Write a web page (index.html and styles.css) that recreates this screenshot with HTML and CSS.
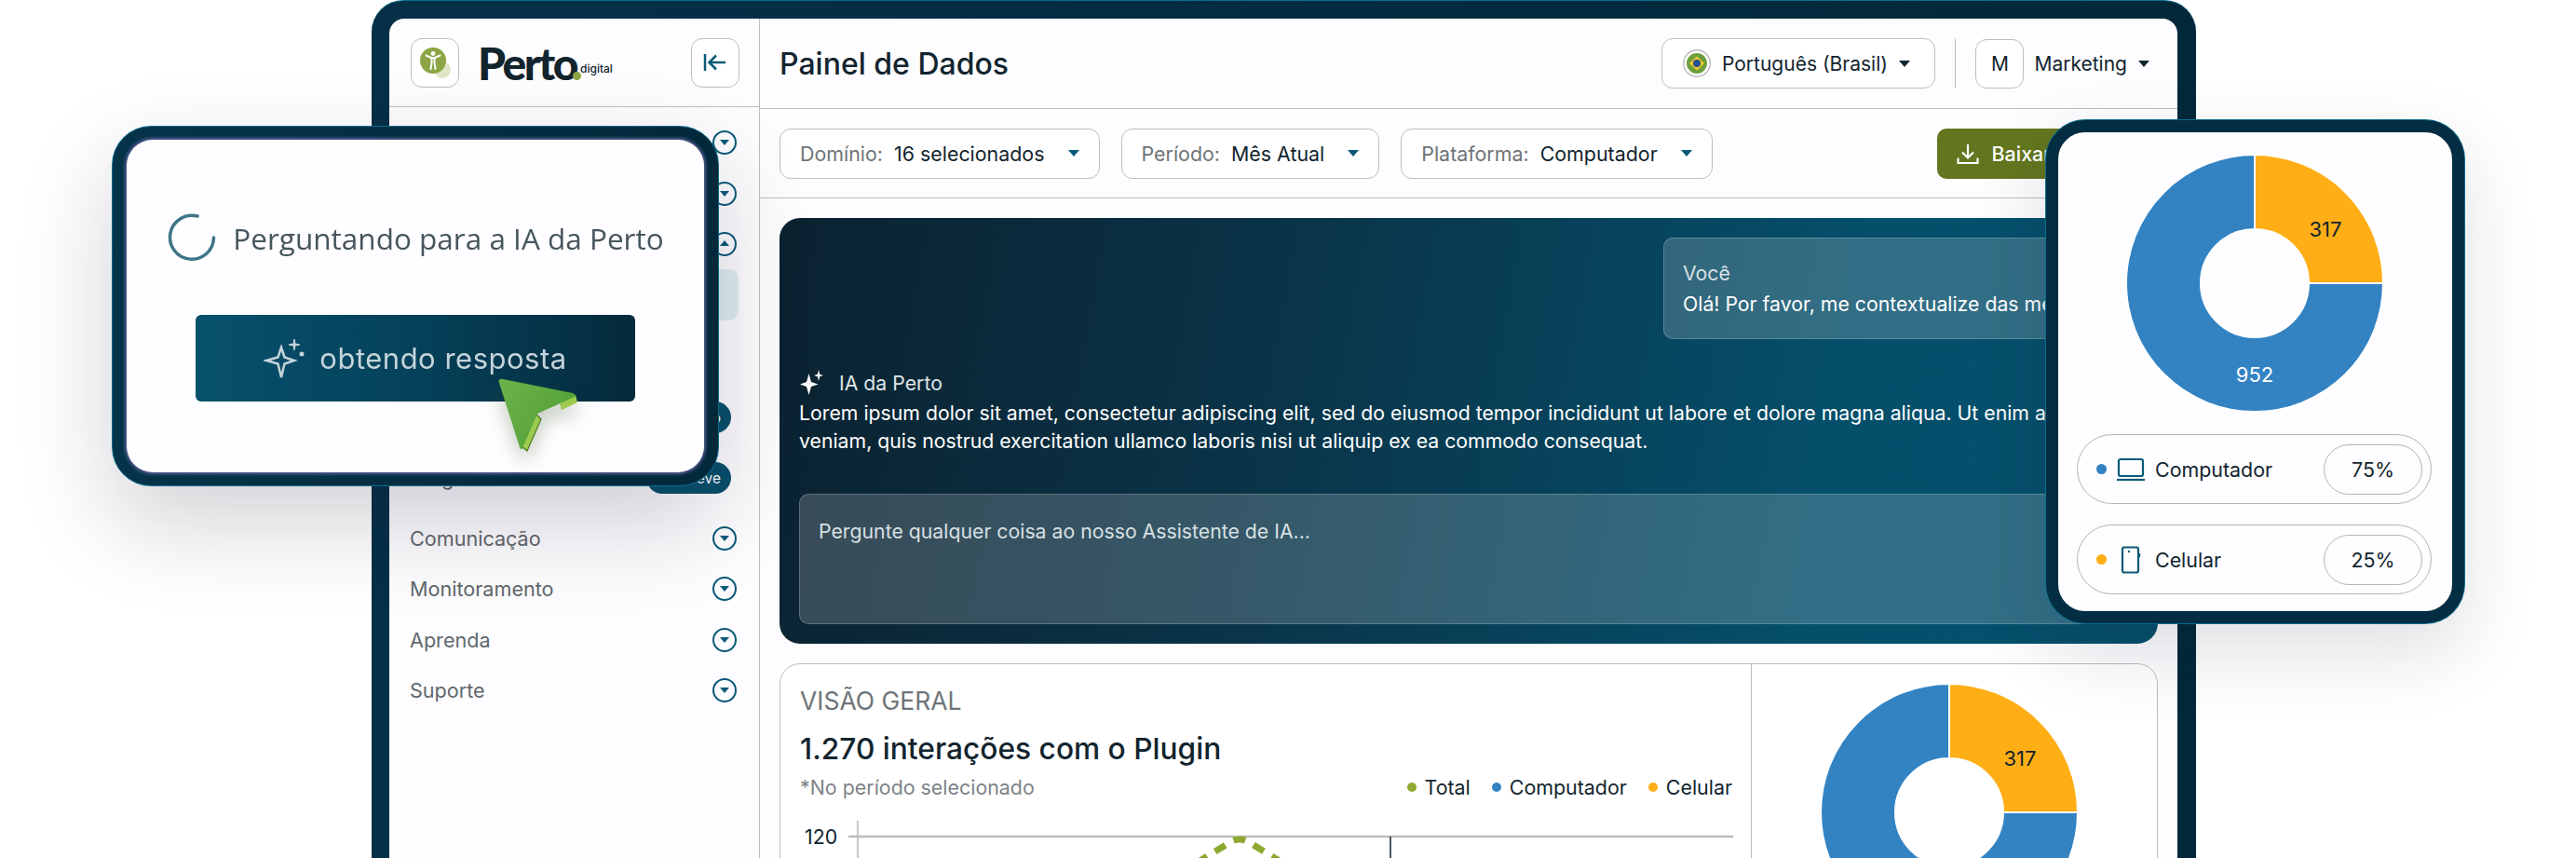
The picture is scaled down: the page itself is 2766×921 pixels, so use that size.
FILE: index.html
```html
<!DOCTYPE html>
<html lang="pt-BR">
  <head>
    <meta charset="UTF-8" />
    <meta name="viewport" content="width=device-width, initial-scale=1.0" />
    <title>Painel de Dados</title>
    <link rel="stylesheet" href="styles.css">
  </head>
  <body>
    <div class="device">
      <div class="screen">

        <aside class="sidebar">
          <div class="sidebar-head">
            <div class="square-btn logo-mark">
              <svg width="36" height="36" viewBox="0 0 36 36">
                <circle cx="26" cy="26" r="9" fill="#dfe6c8"/>
                <circle cx="16" cy="16" r="14" fill="#8ba544"/>
                <circle cx="16" cy="8.5" r="2.4" fill="#fff"/>
                <path d="M8.5 10.5 L14 13 H18 L23.500 10.500 M14.500 13 V18.500 L13.500 25 M17.500 13 V18.500 L18.500 25" fill="none" stroke="#fff" stroke-width="2" stroke-linecap="round"/>
              </svg>
            </div>
            <div class="logo-word">Perto<span class="logo-dot"></span><span class="logo-small">digital</span></div>
            <div class="square-btn collapse-btn">
              <svg width="26" height="22" viewBox="0 0 26 22" fill="none" stroke="#0a5a78" stroke-width="2.500">
                <path d="M2 2 V20 M24 11 H7 M14 3.500 L6.500 11 L14 18.500"/>
              </svg>
            </div>
          </div>
          <nav class="nav">
            <div class="nav-row">Visão Geral<span class="toggle"></span></div>
            <div class="nav-row">Relatórios<span class="toggle"></span></div>
            <div class="nav-row">Plugin<span class="toggle toggle-up"></span></div>
            <div class="nav-row nav-active">Personalizar</div>
            <div class="nav-row nav-tall">Conteúdo</div>
            <div class="nav-row nav-tag">Avatar<span class="tag">Novo</span></div>
            <div class="nav-row nav-tag nav-tag-last">Perguntas<span class="tag">Em breve</span></div>
            <div class="nav-row">Comunicação<span class="toggle"></span></div>
            <div class="nav-row">Monitoramento<span class="toggle"></span></div>
            <div class="nav-row">Aprenda<span class="toggle"></span></div>
            <div class="nav-row">Suporte<span class="toggle"></span></div>
          </nav>
        </aside>

        <main class="main">
          <header class="topbar">
            <h1 class="page-title">Painel de Dados</h1>
            <div class="topbar-right">
              <div class="lang-select">
                <svg class="flag" width="30" height="30" viewBox="0 0 30 30">
                  <circle cx="15" cy="15" r="14.300" fill="#fff" stroke="#b9b9b9" stroke-width="1.400"/>
                  <circle cx="15" cy="15" r="11" fill="#6f9f3c"/>
                  <path d="M15 7.500 L23 15 L15 22.500 L7 15 Z" fill="#f4c92b"/>
                  <circle cx="15" cy="15" r="4" fill="#24508f"/>
                </svg>
                <span>Português (Brasil)</span>
                <span class="caret caret-dark"></span>
              </div>
              <span class="topbar-sep"></span>
              <div class="square-btn user-mark">M</div>
              <div class="user-name">Marketing<span class="caret caret-dark"></span></div>
            </div>
          </header>

          <div class="filters">
            <div class="filter filter-domain"><span class="filter-label">Domínio:</span>16 selecionados<span class="caret"></span></div>
            <div class="filter"><span class="filter-label">Período:</span>Mês Atual<span class="caret"></span></div>
            <div class="filter"><span class="filter-label">Plataforma:</span>Computador<span class="caret"></span></div>
            <div class="download-btn">
              <svg width="24" height="24" viewBox="0 0 24 24" fill="none" stroke="#fff" stroke-width="2.200">
                <path d="M12 2 V16 M6 10.500 L12 16.500 L18 10.500 M1.500 16.500 V22 H22.500 V16.500"/>
              </svg>
              Baixar relatório
            </div>
          </div>

          <div class="content">
            <section class="ai-panel">
              <div class="bubble">
                <div class="bubble-who">Você</div>
                <div>Olá! Por favor, me contextualize das métricas do período</div>
              </div>
              <div class="ai-who">
                <svg width="28" height="28" viewBox="0 0 28 28" fill="#fff">
                  <path d="M10.500 4 L13 13 L20.500 15.500 L13 18 L10.500 27 L8 18 L1 15.500 L8 13 Z"/>
                  <path d="M21 0 L22.200 4.800 L26 6 L22.200 7.200 L21 12 L19.800 7.200 L16 6 L19.800 4.800 Z"/>
                </svg>
                IA da Perto
              </div>
              <p class="ai-text">Lorem ipsum dolor sit amet, consectetur adipiscing elit, sed do eiusmod tempor incididunt ut labore et dolore magna aliqua. Ut enim ad minim veniam, quis nostrud exercitation ullamco laboris nisi ut aliquip ex ea commodo consequat.</p>
              <div class="ai-input">Pergunte qualquer coisa ao nosso Assistente de IA...</div>
            </section>

            <section class="overview">
              <div class="overview-left">
                <div class="overview-kicker">VISÃO GERAL</div>
                <div class="overview-title">1.270 interações com o Plugin</div>
                <div class="overview-sub">
                  <span class="overview-note">*No período selecionado</span>
                  <div class="legend">
                    <span class="legend-item"><i class="dot dot-green"></i>Total</span>
                    <span class="legend-item"><i class="dot dot-blue"></i>Computador</span>
                    <span class="legend-item"><i class="dot dot-orange"></i>Celular</span>
                  </div>
                </div>
                <svg class="chart" width="1002" height="60" viewBox="0 0 1002 60">
                  <line x1="62" y1="0" x2="62" y2="60" stroke="#b5b5b5" stroke-width="1.500"/>
                  <line x1="52" y1="17" x2="1002" y2="17" stroke="#bcbcbc" stroke-width="2.500"/>
                  <line x1="634" y1="17" x2="634" y2="60" stroke="#12242e" stroke-width="1.500"/>
                  <text class="chart-label" x="5" y="25">120</text>
                  <path d="M392 66 L462 23 Q472 17 482 23 L552 66" fill="none" stroke="#8ea92f" stroke-width="7" stroke-dasharray="13 10" stroke-dashoffset="6"/>
                </svg>
              </div>
              <div class="overview-right">
                <svg class="donut" width="280" height="280" viewBox="0 0 280 280">
                  <path d="M140 2 A138 138 0 1 0 278 140 H198 A58 58 0 1 1 140 82 Z" fill="#3383c3" stroke="#fff" stroke-width="2"/>
                  <path d="M140 2 A138 138 0 0 1 278 140 H198 A58 58 0 0 0 140 82 Z" fill="#ffae16" stroke="#fff" stroke-width="2"/>
                  <text class="donut-label" x="216" y="90" text-anchor="middle">317</text>
                  <text class="donut-label donut-label-light" x="140" y="246" text-anchor="middle">952</text>
                </svg>
              </div>
            </section>
          </div>
        </main>
      </div>
    </div>

    <!-- floating cards over the dashboard -->
    <div class="float-ask">
      <div class="ask-inner">
        <div class="ask-status">
          <svg width="54" height="54" viewBox="0 0 54 54" fill="none">
            <path d="M33 4 A23.500 23.500 0 1 0 50.500 27" stroke="#3e7587" stroke-width="3.500" stroke-linecap="round"/>
          </svg>
          <span>Perguntando para a IA da Perto</span>
        </div>
        <div class="ask-btn">
          <svg width="46" height="46" viewBox="0 0 46 46" fill="none" stroke="#c5d4da" stroke-width="2.500">
            <path d="M19 11 L22.500 21.500 L33 25 L22.500 28.500 L19 43 L15.500 28.500 L3 25 L15.500 21.500 Z"/>
            <path d="M33 2 L34 7 L39 8 L34 9 L33 14 L32 9 L27 8 L32 7 Z" fill="#c5d4da" stroke-width="1"/>
            <circle cx="41" cy="18" r="2.500" fill="#c5d4da" stroke="none"/>
          </svg>
          <span>obtendo resposta</span>
        </div>
      </div>
      <svg class="cursor" width="92" height="84" viewBox="0 0 92 84">
        <defs>
          <linearGradient id="cursor-green" x1="0" y1="0" x2="1" y2="0.600">
            <stop offset="0" stop-color="#6db34a"/>
            <stop offset="1" stop-color="#52a036"/>
          </linearGradient>
        </defs>
        <path d="M42 38 L48 44 L33 78 L27 73 Z" fill="#9ccb50" stroke="#4a7a1f" stroke-width="1.200"/>
        <path d="M68 27 L85 18 L87 26 L70 34 Z" fill="#9ccb50"/>
        <path d="M3 5 Q1 0 7 1 L82 16 Q86 17 84 20 L44 38 L28 75 Q26 78 25 74 Z" fill="url(#cursor-green)"/>
      </svg>
    </div>

    <div class="float-device">
      <svg class="donut" width="280" height="280" viewBox="0 0 280 280">
        <path d="M140 2 A138 138 0 1 0 278 140 H198 A58 58 0 1 1 140 82 Z" fill="#3383c3" stroke="#fff" stroke-width="2"/>
        <path d="M140 2 A138 138 0 0 1 278 140 H198 A58 58 0 0 0 140 82 Z" fill="#ffae16" stroke="#fff" stroke-width="2"/>
        <text class="donut-label" x="216" y="90" text-anchor="middle">317</text>
        <text class="donut-label donut-label-light" x="140" y="246" text-anchor="middle">952</text>
      </svg>
      <div class="share-row">
        <i class="dot dot-blue dot-big"></i>
        <svg class="share-icon" width="32" height="26" viewBox="0 0 32 26" fill="none" stroke="#0a5a78" stroke-width="2.200">
          <rect x="3" y="2" width="26" height="18" rx="2"/>
          <path d="M1 24 H31"/>
        </svg>
        <span class="share-name">Computador</span>
        <span class="share-pct">75%</span>
      </div>
      <div class="share-row">
        <i class="dot dot-orange dot-big"></i>
        <svg class="share-icon" width="32" height="30" viewBox="0 0 32 30" fill="none" stroke="#0a5a78" stroke-width="2.200">
          <rect x="7" y="1.500" width="17" height="27" rx="2"/>
          <circle cx="14" cy="6" r="1.200" fill="#0a5a78" stroke="none"/>
          <path d="M25 8 V12"/>
        </svg>
        <span class="share-name">Celular</span>
        <span class="share-pct">25%</span>
      </div>
    </div>
  </body>
</html>
```

FILE: styles.css
```css
html,
body {
  margin: 0;
  height: 921px;
  overflow: hidden;
  background: #fff;
  font-family: Inter, "Liberation Sans", sans-serif;
  color: #12242e;
}

body {
  position: relative;
}

/* the big tablet frame */
.device {
  box-sizing: border-box;
  width: 1959px;
  height: 1100px;
  margin-left: 399px;
  padding: 20px 20px 0 19px;
  background: linear-gradient(to right, #053048, #02283a);
  border-top: 1px solid #0a6d8e;
  border-radius: 34px 34px 0 0;
}

.screen {
  display: grid;
  grid-template-columns: 398px 1fr;
  height: 100%;
  margin-top: -1px;
  overflow: hidden;
  background: #fdfcfe;
  border-radius: 16px 16px 0 0;
}

.square-btn {
  box-sizing: border-box;
  display: flex;
  align-items: center;
  justify-content: center;
  width: 52px;
  height: 53px;
  background: #fff;
  border: 1.500px solid #bdbdbd;
  border-radius: 12px;
}

.sidebar {
  border-right: 1.500px solid #bdbdbd;
}

.sidebar-head {
  display: flex;
  align-items: center;
  box-sizing: border-box;
  height: 95px;
  padding: 0 21px 0 23px;
  border-bottom: 1.500px solid #bdbdbd;
}

.logo-word {
  position: relative;
  flex: 1;
  margin-left: 20px;
  font-family: Lato, Inter, sans-serif;
  font-size: 48px;
  font-weight: 900;
  letter-spacing: -2.500px;
  color: #12242e;
}

.logo-dot {
  display: inline-block;
  width: 9px;
  height: 9px;
  margin-left: -4px;
  background: #8ba544;
  border-radius: 50%;
}

.logo-small {
  position: relative;
  top: -8px;
  margin-left: -1px;
  font-family: Inter, sans-serif;
  font-size: 12px;
  font-weight: 500;
  letter-spacing: 0;
}

.nav {
  padding: 11px 22px 0 22px;
}

.nav-row {
  display: flex;
  align-items: center;
  justify-content: space-between;
  box-sizing: border-box;
  height: 54.400px;
  padding-right: 2px;
  font-size: 21.600px;
  color: #60686d;
}

.nav-active {
  margin-left: -10px;
  padding-left: 10px;
  background: #dfedf2;
  border-radius: 10px;
}

.nav-tall {
  height: 72px;
}

.nav-tag {
  height: 65px;
  padding-right: 8px;
}

.nav-tag-last {
  margin-bottom: 5px;
}

.tag {
  display: flex;
  align-items: center;
  height: 34px;
  padding: 0 11px;
  background: #07506c;
  border-radius: 17px;
  font-size: 15.500px;
  color: #fff;
}

.toggle {
  position: relative;
  box-sizing: border-box;
  width: 26px;
  height: 26px;
  border: 2.500px solid #0a5a78;
  border-radius: 50%;
}

.toggle::after {
  content: "";
  position: absolute;
  top: 8px;
  left: 5.500px;
  border-top: 6px solid #0a5a78;
  border-left: 5px solid transparent;
  border-right: 5px solid transparent;
}

.toggle-up::after {
  top: 7px;
  border-top: none;
  border-bottom: 6px solid #0a5a78;
}

.main {
  min-width: 0;
}

.topbar {
  display: flex;
  align-items: center;
  justify-content: space-between;
  box-sizing: border-box;
  height: 97px;
  padding: 0 30px 0 21px;
  border-bottom: 1.500px solid #bdbdbd;
}

.page-title {
  margin: 0;
  font-size: 32px;
  font-weight: 500;
}

.topbar-right {
  display: flex;
  align-items: center;
  font-size: 21px;
  white-space: nowrap;
}

.lang-select {
  display: flex;
  align-items: center;
  box-sizing: border-box;
  width: 294px;
  height: 54px;
  padding: 0 22px;
  gap: 12px;
  background: #fff;
  border: 1.500px solid #bdbdbd;
  border-radius: 12px;
}

.topbar-sep {
  width: 1.500px;
  height: 54px;
  margin: 0 21px;
  background: #bdbdbd;
}

.user-mark {
  font-size: 21px;
}

.user-name {
  display: flex;
  align-items: center;
  margin-left: 11px;
}

.caret {
  display: inline-block;
  margin-left: 18px;
  border-top: 7px solid #0a5a78;
  border-left: 6px solid transparent;
  border-right: 6px solid transparent;
}

.caret-dark {
  margin-left: 0;
  border-top-color: #12242e;
}

.user-name .caret-dark {
  margin-left: 12px;
}

.filters {
  display: flex;
  align-items: center;
  box-sizing: border-box;
  height: 96px;
  padding: 0 21px;
  gap: 23px;
  border-bottom: 1.500px solid #bdbdbd;
  font-size: 21.400px;
}

.filter {
  display: flex;
  align-items: center;
  box-sizing: border-box;
  height: 54px;
  padding: 0 21px;
  background: #fff;
  border: 1.500px solid #bdbdbd;
  border-radius: 12px;
}

.filter .caret {
  margin-left: 25px;
}

.filter-label {
  margin-right: 12px;
  color: #6e7478;
}

.download-btn {
  display: flex;
  align-items: center;
  gap: 14px;
  box-sizing: border-box;
  height: 54px;
  margin-left: auto;
  padding: 0 24px 0 21px;
  background: #63761f;
  border-radius: 10px;
  color: #fff;
  font-weight: 500;
}

.content {
  padding: 21px 21px 0;
}

.ai-panel {
  display: flex;
  flex-direction: column;
  box-sizing: border-box;
  height: 457px;
  padding: 21px;
  background: linear-gradient(100deg, #0b2230 0%, #0a3347 35%, #054f6b 75%, #05506c 100%);
  border-radius: 22px;
  color: #fff;
  font-size: 21.250px;
}

.bubble {
  box-sizing: border-box;
  align-self: flex-end;
  width: 510px;
  height: 109px;
  padding: 21px 20px 0;
  overflow: hidden;
  white-space: nowrap;
  background: rgba(255, 255, 255, 0.18);
  border: 1.500px solid rgba(255, 255, 255, 0.2);
  border-radius: 10px;
  line-height: 33px;
}

.bubble-who {
  color: #d8e0e4;
}

.ai-who {
  display: flex;
  align-items: center;
  gap: 15px;
  margin-top: 33px;
  color: #dfe6e9;
}

.ai-text {
  margin: 3px 0 0;
  line-height: 30px;
}

.ai-input {
  box-sizing: border-box;
  height: 140px;
  margin-top: auto;
  padding: 26px 20px;
  background: rgba(255, 255, 255, 0.18);
  border: 1.500px solid rgba(255, 255, 255, 0.2);
  border-radius: 10px;
  color: #d8e0e4;
}

.overview {
  display: flex;
  box-sizing: border-box;
  height: 600px;
  margin-top: 21px;
  background: #fff;
  border: 1.500px solid #bdbdbd;
  border-radius: 22px;
}

.overview-left {
  box-sizing: border-box;
  width: 1043px;
  padding: 23px 20px 0 21px;
  border-right: 1.500px solid #bdbdbd;
}

.overview-kicker {
  font-size: 26.500px;
  color: #6e7478;
}

.overview-title {
  margin-top: 16px;
  font-size: 31.700px;
  font-weight: 500;
}

.overview-sub {
  display: flex;
  justify-content: space-between;
  align-items: center;
  margin-top: 9px;
  font-size: 21.400px;
}

.overview-note {
  color: #7d8387;
}

.legend {
  display: flex;
  gap: 23px;
}

.legend-item {
  display: flex;
  align-items: center;
  gap: 9px;
}

.dot {
  display: block;
  width: 10px;
  height: 10px;
  border-radius: 50%;
}

.dot-big {
  width: 11px;
  height: 11px;
}

.dot-green {
  background: #8ea92f;
}

.dot-blue {
  background: #3383c3;
}

.dot-orange {
  background: #ffae16;
}

.chart {
  display: block;
  margin-top: 23px;
}

.chart-label {
  font-size: 21.400px;
  fill: #12242e;
}

.overview-right {
  display: flex;
  justify-content: center;
  align-items: flex-start;
  flex: 1;
  padding: 19px 12px 0 0;
}

.donut {
  display: block;
}

.donut-label {
  font-family: Inter, sans-serif;
  font-size: 22px;
  fill: #12242e;
}

.donut-label-light {
  fill: #fff;
}

/* floating card on the left */
.float-ask {
  position: absolute;
  top: 135px;
  left: 120px;
  box-sizing: border-box;
  width: 652px;
  height: 387px;
  padding: 14px 15px;
  background: linear-gradient(to right, #053349, #02283a);
  border: 1px solid #0a6d8e;
  border-radius: 42px;
  box-shadow: 0 40px 100px rgba(30, 25, 50, 0.2);
}

.ask-inner {
  display: flex;
  flex-direction: column;
  align-items: center;
  box-sizing: border-box;
  height: 100%;
  padding-top: 78px;
  background: #fefdff;
  border-radius: 28px;
  box-shadow: 0 0 4px 1px #7b74b8;
}

.ask-status {
  display: flex;
  align-items: center;
  gap: 17px;
  font-family: "Open Sans", sans-serif;
  font-size: 31.500px;
  font-weight: 500;
  color: #46565d;
  filter: blur(0.7px);
}

.ask-btn {
  display: flex;
  align-items: center;
  justify-content: center;
  gap: 14px;
  box-sizing: border-box;
  width: 472px;
  height: 93px;
  margin-top: 56px;
  background: linear-gradient(to right, #07516d, #05415a 50%, #052a3c);
  border-radius: 6px;
  font-size: 31px;
  letter-spacing: 0.5px;
  color: #c5d4da;
  filter: blur(0.6px);
}

.cursor {
  position: absolute;
  top: 270px;
  left: 412px;
  filter: drop-shadow(0 10px 10px rgba(60, 90, 40, 0.3));
}

/* floating card on the right */
.float-device {
  position: absolute;
  top: 129px;
  left: 2197px;
  display: flex;
  flex-direction: column;
  align-items: center;
  box-sizing: border-box;
  width: 449px;
  height: 540px;
  padding: 22px 2px 0 0;
  background: #fefdff;
  border: 13px solid #032d42;
  border-radius: 42px;
  box-shadow: 0 0 0 1px #0a6d8e, 0 30px 80px rgba(30, 25, 50, 0.14);
}

.share-row {
  display: flex;
  align-items: center;
  box-sizing: border-box;
  width: 381px;
  height: 75px;
  margin-top: 22px;
  padding: 0 9px 0 20px;
  border: 1.500px solid #b5b5b5;
  border-radius: 38px;
  font-size: 21.400px;
}

.share-icon {
  margin-left: 10px;
}

.share-name {
  flex: 1;
  margin-left: 10px;
}

.share-pct {
  display: flex;
  align-items: center;
  justify-content: center;
  box-sizing: border-box;
  width: 106px;
  height: 54px;
  border: 1.500px solid #b5b5b5;
  border-radius: 27px;
}
```
